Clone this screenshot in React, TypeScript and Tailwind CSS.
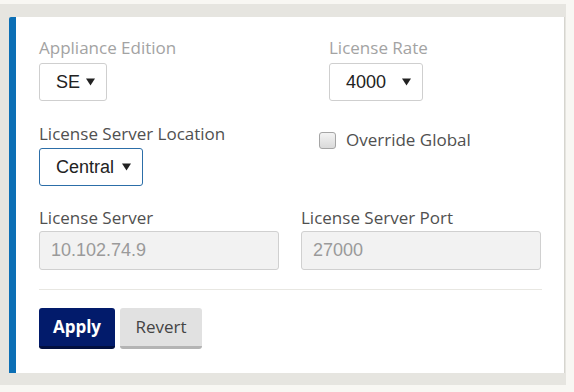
import React from "react";

function Caret() {
  return (
    <svg width="9" height="8" viewBox="0 0 9 8" className="shrink-0">
      <path d="M0 0.5h9L4.5 7.5z" fill="#222" />
    </svg>
  );
}

function SelectBox({ value, width, focused }: { value: string; width: string; focused?: boolean }) {
  return (
    <div
      className={`flex items-center justify-between h-[38px] pl-[16px] pr-[11px] rounded-[3px] border bg-white text-[18px] text-[#222] ${width} ${
        focused ? "border-[#2c6ea8]" : "border-[#cfcfcf]"
      }`}
      style={{ fontFamily: '"Liberation Sans", Arial, sans-serif' }}
    >
      <span>{value}</span>
      <Caret />
    </div>
  );
}

function ReadOnlyInput({ value }: { value: string }) {
  return (
    <div
      className="flex items-center h-[39px] w-[240px] pl-[11px] rounded-[3px] border border-[#d0d0d0] bg-[#f2f2f2] text-[18px] text-[#9a9a9a]"
      style={{ fontFamily: '"Liberation Sans", Arial, sans-serif' }}
    >
      {value}
    </div>
  );
}

export default function App() {
  return (
    <div className="min-h-screen bg-[#f8f7f3] pt-[4px]" style={{ fontFamily: '"Open Sans", sans-serif' }}>
      <div className="w-[566px] bg-[#e6e5e0] pt-[13px] pb-[12px] pl-[9px] pr-[1px]">
        <div className="h-[356px] bg-white border-l-[7px] border-l-[#0c6fb5] border-r border-r-[#d6d5cf] rounded-tl-[2px] pl-[23px] pr-[22px] pt-[21px]">
          {/* row 1 */}
          <div className="flex">
            <div className="w-[290px]">
              <div className="text-[17px] leading-[20px] text-[#a3a3a3]">Appliance Edition</div>
              <div className="mt-[5px]">
                <SelectBox value="SE" width="w-[68px]" />
              </div>
            </div>
            <div>
              <div className="text-[17px] leading-[20px] text-[#a3a3a3]">License Rate</div>
              <div className="mt-[5px]">
                <SelectBox value="4000" width="w-[94px]" />
              </div>
            </div>
          </div>

          {/* row 2 */}
          <div className="flex mt-[23px]">
            <div className="w-[280px]">
              <div className="text-[17px] leading-[20px] text-[#505050]">License Server Location</div>
              <div className="mt-[4px]">
                <SelectBox value="Central" width="w-[104px]" focused />
              </div>
            </div>
            <label className="flex items-center gap-[10px] h-[20px] mt-[6px] text-[17px] text-[#505050]">
              <span className="w-[17px] h-[17px] rounded-[3px] border border-[#a5a5a5] bg-gradient-to-b from-[#f3f3f3] to-[#dadada]" />
              Override Global
            </label>
          </div>

          {/* row 3 */}
          <div className="flex gap-[22px] mt-[22px]">
            <div>
              <div className="text-[17px] leading-[20px] text-[#505050]">License Server</div>
              <div className="mt-[3px]">
                <ReadOnlyInput value="10.102.74.9" />
              </div>
            </div>
            <div>
              <div className="text-[17px] leading-[20px] text-[#505050]">License Server Port</div>
              <div className="mt-[3px]">
                <ReadOnlyInput value="27000" />
              </div>
            </div>
          </div>

          <div className="mt-[19px] h-px w-[503px] bg-[#e8e7e2]" />

          <div className="flex gap-[5px] mt-[18px]">
            <button className="h-[41px] w-[76px] rounded-[3px] bg-[#021b6b] border-b-[3px] border-b-[#010f3f] text-white text-[17px] font-bold">
              Apply
            </button>
            <button className="h-[41px] w-[82px] rounded-[3px] bg-[#e1e1e1] border-b-[3px] border-b-[#b4b4b4] text-[#444] text-[17px]">
              Revert
            </button>
          </div>
        </div>
      </div>
    </div>
  );
}
